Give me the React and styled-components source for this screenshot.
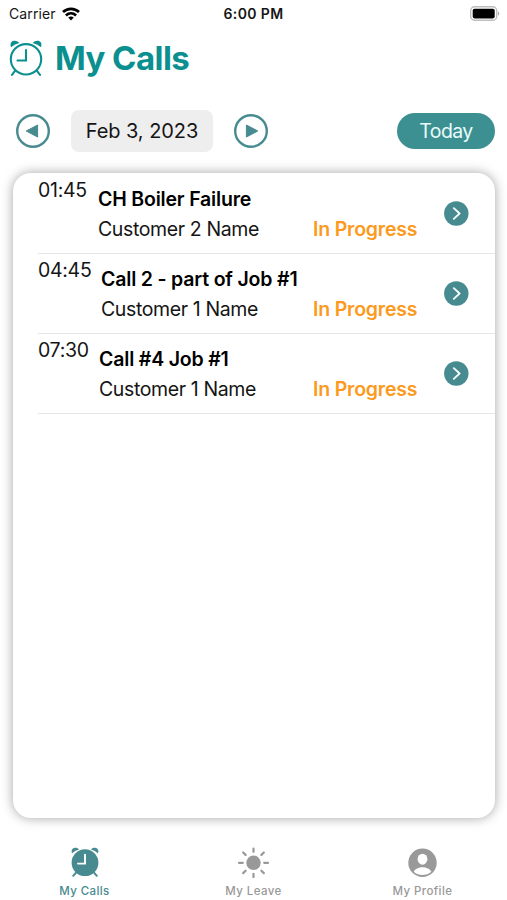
import React from 'react'
import styled, { createGlobalStyle } from 'styled-components'

const TEAL = '#0b908f'
const SOFT_TEAL = '#478b90'
const GREY = '#999999'
const ORANGE = '#fb9a1c'

const GlobalStyle = createGlobalStyle`
  * {
    box-sizing: border-box;
  }

  body {
    margin: 0;
    background-color: #ffffff;
  }
`

const Screen = styled.div`
  width: 507px;
  height: 900px;
  display: flex;
  flex-direction: column;
  overflow: hidden;
  background-color: #ffffff;
  color: #151515;
  font-family: Inter, 'Liberation Sans', sans-serif;
  white-space: nowrap;

  & svg {
    display: block;
    flex: none;
  }
`

const StatusBar = styled.div`
  display: grid;
  grid-template-columns: 1fr auto 1fr;
  align-items: center;
  height: 27px;
  padding: 0 7px 0 9px;
`

const Carrier = styled.div`
  display: flex;
  align-items: center;
  gap: 6px;
  font-size: 14px;
  letter-spacing: 0.1px;
`

const Clock = styled.div`
  margin-right: 2px;
  font-size: 14px;
  font-weight: 600;
  letter-spacing: 0.4px;
`

const Battery = styled.div`
  justify-self: end;
`

const Header = styled.header`
  display: flex;
  align-items: center;
  height: 62px;
  padding: 0 9px;
  gap: 12px;
`

const Title = styled.h1`
  margin: 0;
  font-size: 33px;
  font-weight: 700;
  line-height: 40px;
  letter-spacing: -0.55px;
  color: ${TEAL};
`

const DateBar = styled.div`
  display: flex;
  align-items: center;
  height: 84px;
  padding: 0 12px 1px 16px;
`

const RoundButton = styled.button`
  border: 0;
  padding: 0;
  background: none;
`

const DateField = styled.div`
  width: 142px;
  height: 42px;
  margin: 0 21px;
  border-radius: 8px;
  background-color: #eeeeef;
  font-size: 20px;
  line-height: 42px;
  text-align: center;
  letter-spacing: -0.05px;
`

const TodayButton = styled.button`
  width: 98px;
  height: 36px;
  margin-left: auto;
  padding: 0;
  border: 0;
  border-radius: 18px;
  background-color: #3c9092;
  color: #e9fbfb;
  font-family: inherit;
  font-size: 19.5px;
  letter-spacing: -0.6px;
`

const Card = styled.main`
  height: 645px;
  margin: 0 12px 0 13px;
  padding: 1px 0 0 25px;
  border-radius: 18px;
  background-color: #ffffff;
  box-shadow: 0 0 12px rgba(0, 0, 0, 0.36);
`

const CallRow = styled.div`
  display: flex;
  height: 80px;
  border-bottom: 1px solid #e6e6e7;
`

const Time = styled.div`
  padding-top: 4px;
  width: ${({ $width }) => $width}px;
  font-size: 19.5px;
  line-height: 24px;
  letter-spacing: -0.3px;
`

const Details = styled.div`
  flex: 1;
  padding-top: 13px;
`

const CallName = styled.div`
  font-size: 19.5px;
  font-weight: 600;
  line-height: 24px;
  letter-spacing: -0.18px;
  color: #000000;
`

const Customer = styled.div`
  margin-top: 6px;
  font-size: 19.5px;
  line-height: 24px;
  letter-spacing: -0.38px;
`

const Status = styled.div`
  width: 131px;
  padding-top: 43px;
  font-size: 19.5px;
  font-weight: 600;
  line-height: 24px;
  letter-spacing: -0.2px;
  color: ${ORANGE};
`

const OpenButton = styled.button`
  align-self: center;
  margin-right: 26px;
  border: 0;
  padding: 0;
  background: none;
`

const TabBar = styled.nav`
  display: grid;
  grid-template-columns: repeat(3, 1fr);
  flex: 1;
  padding-top: 29px;
`

const Tab = styled.div`
  display: flex;
  flex-direction: column;
  align-items: center;
  gap: 6px;
  font-size: 11.5px;
  font-weight: 500;
  line-height: 15px;
  letter-spacing: 0.4px;
  color: ${({ $active }) => ($active ? SOFT_TEAL : GREY)};
`

const WifiIcon = () => (
  <svg width="18" height="14" viewBox="0 0 18 14" fill="none" stroke="#000" strokeWidth="2.7">
    <path d="M1 5C5.5 .7 12.5 .7 17 5" />
    <path d="M3.9 8.4C6.9 5.7 11.1 5.7 14.1 8.4" />
    <path d="M6.2 10.6C7.9 9.2 10.1 9.2 11.8 10.6L9 13.6Z" fill="#000" stroke="none" />
  </svg>
)

const BatteryIcon = () => (
  <svg width="31" height="15" viewBox="0 0 31 15">
    <rect x="1.7" y=".8" width="26" height="13.4" rx="3.8" fill="#fff" stroke="#bdbdbd" strokeWidth="1.4" />
    <rect x="3.7" y="2.8" width="22" height="9.6" rx="1.8" fill="#000" />
    <path d="M29 5.2Q31.6 7.5 29 9.8Z" fill="#aaa" />
  </svg>
)

const AlarmOutline = () => (
  <svg width="34" height="36" viewBox="0 0 34 36" fill="none" stroke={TEAL} strokeWidth="2.1">
    <circle cx="17" cy="19.3" r="15.2" />
    <path d="M17 10V20.5H8.5M6.2 30.6L3 34.8M27.8 30.6L31 34.8" strokeLinecap="round" />
    <path d="M2.1 7.2C.5 3.4 2.5 .7 5.5 .7C8 .7 9.5 1.7 10.3 3.1Q5 4.4 2.1 7.2Z" fill={TEAL} stroke="none" />
    <path d="M31.9 7.2C33.5 3.4 31.5 .7 28.5 .7C26 .7 24.5 1.7 23.7 3.1Q29 4.4 31.9 7.2Z" fill={TEAL} stroke="none" />
  </svg>
)

const AlarmFilled = () => (
  <svg width="28" height="31" viewBox="0 0 28 31" fill={SOFT_TEAL}>
    <circle cx="14" cy="15.7" r="13.4" />
    <path d="M1.1 6.2C-.3 3.2 1.5 .7 4.2 .7C6 .7 7.3 1.4 8 2.4Q4 3.6 1.1 6.2Z" />
    <path d="M26.9 6.2C28.3 3.2 26.5 .7 23.8 .7C22 .7 20.7 1.4 20 2.4Q24 3.6 26.9 6.2Z" />
    <path d="M5.2 25.4L2.2 28.8M22.8 25.4L25.8 28.8" stroke={SOFT_TEAL} strokeWidth="2" strokeLinecap="round" />
    <path d="M14 7.6V16.6H7" fill="none" stroke="#fff" strokeWidth="1.9" strokeLinecap="round" />
  </svg>
)

const ArrowIcon = ({ back }) => (
  <svg width="34" height="34" viewBox="0 0 34 34">
    <circle cx="17" cy="17" r="15.8" fill="none" stroke={SOFT_TEAL} strokeWidth="2.4" />
    <path
      d="M12.4 11V23L23.8 17Z"
      fill={SOFT_TEAL}
      stroke={SOFT_TEAL}
      strokeLinejoin="round"
      transform={back ? 'rotate(180 17 17)' : undefined}
    />
  </svg>
)

const ChevronIcon = () => (
  <svg width="25" height="25" viewBox="0 0 25 25">
    <circle cx="12.3" cy="12.5" r="12.2" fill={SOFT_TEAL} />
    <path d="M9.8 7.2L15.6 12.5L9.8 17.8" fill="none" stroke="#fff" strokeWidth="1.8" strokeLinecap="round" strokeLinejoin="round" />
  </svg>
)

const SunIcon = () => (
  <svg width="31" height="31" viewBox="0 0 31 31">
    <circle cx="15.5" cy="15.8" r="7.2" fill={GREY} />
    <path
      d="M15.5 1.6V4.8M15.5 26.8V30M1 15.8H4.8M26.2 15.8H30M5.2 5.5L7.6 7.9M23.4 23.7L25.8 26.1M5.2 26.1L7.6 23.7M23.4 7.9L25.8 5.5"
      stroke={GREY}
      strokeWidth="2.2"
      strokeLinecap="round"
    />
  </svg>
)

const ProfileIcon = () => (
  <svg width="29" height="31" viewBox="0 0 29 31">
    <circle cx="14.5" cy="15.8" r="14.2" fill={GREY} />
    <ellipse cx="14.5" cy="12.2" rx="4.9" ry="5.5" fill="#fff" />
    <path d="M5.7 24.8C8.4 18.8 20.6 18.8 23.3 24.8C18.5 29.2 10.5 29.2 5.7 24.8Z" fill="#fff" />
  </svg>
)

const calls = [
  { time: '01:45', name: 'CH Boiler Failure', customer: 'Customer 2 Name', indent: 60 },
  { time: '04:45', name: 'Call 2 - part of Job #1', customer: 'Customer 1 Name', indent: 63 },
  { time: '07:30', name: 'Call #4 Job #1', customer: 'Customer 1 Name', indent: 61 },
]

const App = () => {
  return (
    <Screen>
      <GlobalStyle />
      <StatusBar>
        <Carrier>
          <span>Carrier</span>
          <WifiIcon />
        </Carrier>
        <Clock>6:00 PM</Clock>
        <Battery>
          <BatteryIcon />
        </Battery>
      </StatusBar>
      <Header>
        <AlarmOutline />
        <Title>My Calls</Title>
      </Header>
      <DateBar>
        <RoundButton aria-label="Previous day">
          <ArrowIcon back />
        </RoundButton>
        <DateField>Feb 3, 2023</DateField>
        <RoundButton aria-label="Next day">
          <ArrowIcon />
        </RoundButton>
        <TodayButton>Today</TodayButton>
      </DateBar>
      <Card>
        {calls.map((call) => (
          <CallRow key={call.time}>
            <Time $width={call.indent}>{call.time}</Time>
            <Details>
              <CallName>{call.name}</CallName>
              <Customer>{call.customer}</Customer>
            </Details>
            <Status>In Progress</Status>
            <OpenButton aria-label="Open call">
              <ChevronIcon />
            </OpenButton>
          </CallRow>
        ))}
      </Card>
      <TabBar>
        <Tab $active>
          <AlarmFilled />
          My Calls
        </Tab>
        <Tab>
          <SunIcon />
          My Leave
        </Tab>
        <Tab>
          <ProfileIcon />
          My Profile
        </Tab>
      </TabBar>
    </Screen>
  )
}

export default App
